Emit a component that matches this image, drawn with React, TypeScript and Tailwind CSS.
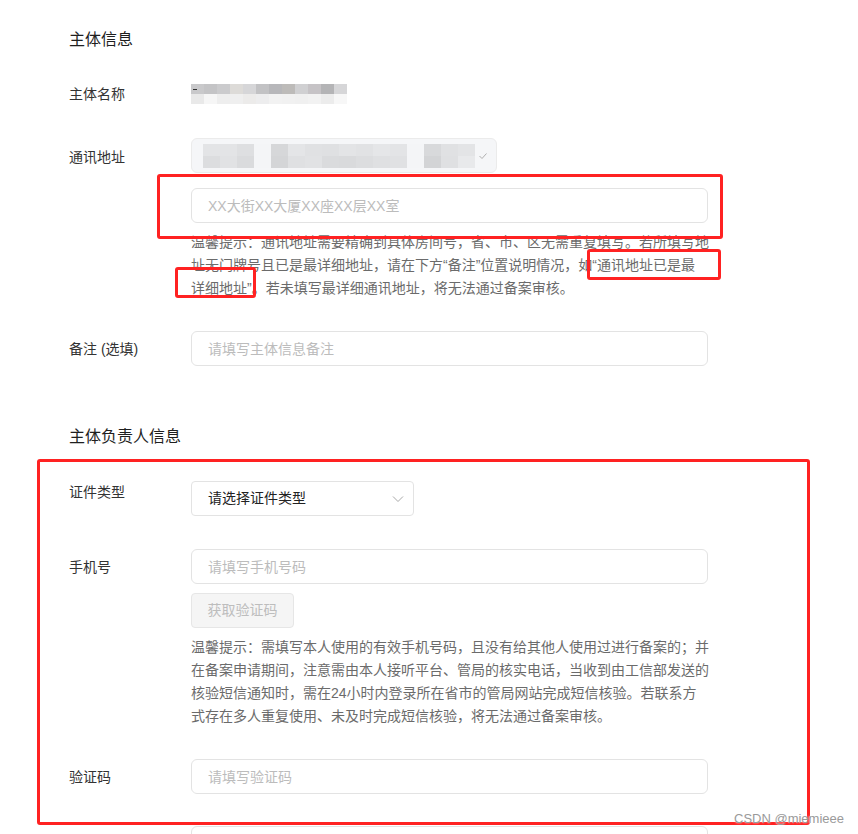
import type { ReactNode } from "react"

// blurred (mosaic) placeholders for masked values
const nameTop = ["#c9c9cb", "#c4c4c6", "#cbcbcd", "#dddbd8", "#d6d6d8", "#c2c2c4", "#b7b7ba", "#bdbbb9", "#d0d0d2", "#c6c3c6", "#b4b4b6", "#d6d6d8"]
const nameBottom = ["#e9e9e9", "#f6f6f6", "#eeeeee", "#efefef", "#ecebea", "#ededee", "#f2f2f2", "#f1f1f1", "#f0f0f0", "#f2f2f2", "#ececec", "#f7f7f7"]
const addrTop = ["#e3e4e6", "#e3e4e6", "#dedfe1", "#f4f5f7", "#d6d7d9", "#e4e5e7", "#e0e1e3", "#dfe0e2", "#e3e4e6", "#e1e2e4", "#e5e6e8", "#e3e4e6", "#f4f5f7", "#d8d9db", "#e0e1e3", "#e3e4e6"]
const addrBottom = ["#dcdddf", "#e1e2e4", "#dadbdd", "#f4f5f7", "#d4d5d7", "#dfe0e2", "#e1e2e4", "#dadbdd", "#d9dadc", "#dcdddf", "#dfe0e2", "#e0e1e3", "#f4f5f7", "#d3d4d6", "#dfe0e2", "#e8e9eb"]

function Mosaic({ top, bottom, cell, h }: { top: string[]; bottom: string[]; cell: number; h: number }) {
  return (
    <svg width={top.length * cell} height={h * 2} className="block">
      {top.map((c, i) => (
        <rect key={"t" + i} x={i * cell} y={0} width={cell} height={h} fill={c} />
      ))}
      {bottom.map((c, i) => (
        <rect key={"b" + i} x={i * cell} y={h} width={cell} height={h} fill={c} />
      ))}
    </svg>
  )
}

function Field({ label, labelClass, children }: { label: string; labelClass: string; children: ReactNode }) {
  return (
    <div className="flex">
      <div className={`w-[122px] shrink-0 text-[14px] leading-[20px] text-[#333] ${labelClass}`}>{label}</div>
      <div className="flex-1">{children}</div>
    </div>
  )
}

function TextInput({ placeholder }: { placeholder: string }) {
  return (
    <input
      placeholder={placeholder}
      className="block w-[517px] h-[35px] rounded-[6px] border border-[#e3e3e3] bg-white pl-4 text-[14px] text-[#333] placeholder:text-[#bcbcbc] outline-none"
    />
  )
}

function Hint({ lines }: { lines: string[] }) {
  return (
    <div className="text-[14px] leading-[23px] text-[#6b6b6b]">
      {lines.map((l) => (
        <div key={l} className="whitespace-nowrap">{l}</div>
      ))}
    </div>
  )
}

export default function App() {
  return (
    <div className="relative min-h-screen bg-white pl-[69px] pt-[29px] font-['Liberation_Sans','Noto_Sans_CJK_SC',sans-serif]">
      <h2 className="text-[16px] leading-[22px] text-[#1f1f1f]">主体信息</h2>

      <div className="mt-[33px]">
        <Field label="主体名称" labelClass="">
          <div className="relative">
            <Mosaic top={nameTop} bottom={nameBottom} cell={13} h={10} />
            <div className="absolute left-[2px] top-[5px] h-[1px] w-[4px] bg-[#333]" />
          </div>
        </Field>
      </div>

      <div className="mt-[34px]">
        <Field label="通讯地址" labelClass="pt-[9px]">
          <div className="flex h-[35px] w-[306px] items-center rounded-[6px] border border-[#ebebeb] bg-[#f5f6f8] pl-[11px] pr-[8px]">
            <Mosaic top={addrTop} bottom={addrBottom} cell={17} h={12} />
            <svg width="10" height="8" viewBox="0 0 10 8" className="ml-auto">
              <path d="M1.5 4 L4 6.5 L8.5 1.5" fill="none" stroke="#b0b0b0" strokeWidth="1" />
            </svg>
          </div>
          <div className="mt-[15px]">
            <TextInput placeholder="XX大街XX大厦XX座XX层XX室" />
          </div>
          <div className="mt-[8px]">
            <Hint
              lines={[
                "温馨提示：通讯地址需要精确到具体房间号，省、市、区无需重复填写。若所填写地",
                "址无门牌号且已是最详细地址，请在下方“备注”位置说明情况，如“通讯地址已是最",
                "详细地址”。若未填写最详细通讯地址，将无法通过备案审核。",
              ]}
            />
          </div>
        </Field>
      </div>

      <div className="mt-[31px]">
        <Field label="备注 (选填)" labelClass="pt-[8px]">
          <TextInput placeholder="请填写主体信息备注" />
        </Field>
      </div>

      <h2 className="mt-[60px] text-[16px] leading-[22px] text-[#1f1f1f]">主体负责人信息</h2>

      <div className="mt-[33px]">
        <Field label="证件类型" labelClass="pt-[1px]">
          <div className="flex h-[35px] w-[223px] items-center rounded-[4px] border border-[#e3e3e3] bg-white pl-4 pr-[9px]">
            <span className="text-[14px] text-[#222]">请选择证件类型</span>
            <svg width="12" height="8" viewBox="0 0 12 8" className="ml-auto">
              <path d="M1 1.5 L6 6.5 L11 1.5" fill="none" stroke="#a8a8a8" strokeWidth="1" />
            </svg>
          </div>
        </Field>
      </div>

      <div className="mt-[33px]">
        <Field label="手机号" labelClass="pt-[8px]">
          <TextInput placeholder="请填写手机号码" />
          <button className="mt-[9px] block h-[35px] w-[103px] rounded-[4px] border border-[#e6e6e6] bg-[#f5f5f5] text-[14px] text-[#bdbdbd]">
            获取验证码
          </button>
          <div className="mt-[8px]">
            <Hint
              lines={[
                "温馨提示：需填写本人使用的有效手机号码，且没有给其他人使用过进行备案的；并",
                "在备案申请期间，注意需由本人接听平台、管局的核实电话，当收到由工信部发送的",
                "核验短信通知时，需在24小时内登录所在省市的管局网站完成短信核验。若联系方",
                "式存在多人重复使用、未及时完成短信核验，将无法通过备案审核。",
              ]}
            />
          </div>
        </Field>
      </div>

      <div className="mt-[31px]">
        <Field label="验证码" labelClass="pt-[8px]">
          <TextInput placeholder="请填写验证码" />
        </Field>
      </div>

      <div className="mt-[32px] pb-10">
        <Field label="" labelClass="">
          <TextInput placeholder="" />
        </Field>
      </div>

      {/* red annotation boxes */}
      <div className="pointer-events-none absolute left-[157px] top-[174px] h-[65px] w-[566px] rounded-[3px] border-[3px] border-[#f22]" />
      <div className="pointer-events-none absolute left-[587px] top-[249px] h-[31px] w-[134px] rounded-[3px] border-[3px] border-[#f22]" />
      <div className="pointer-events-none absolute left-[175px] top-[267px] h-[31px] w-[81px] rounded-[3px] border-[3px] border-[#f22]" />
      <div className="pointer-events-none absolute left-[37px] top-[459px] h-[366px] w-[773px] rounded-[3px] border-[3px] border-[#f22]" />

      <div className="pointer-events-none absolute left-[734px] top-[810px] font-['Liberation_Sans',sans-serif] text-[13px] leading-[18px] text-[#9a9a9a] [text-shadow:0_0_2px_#fff]">
        CSDN @miemieee
      </div>
    </div>
  )
}
